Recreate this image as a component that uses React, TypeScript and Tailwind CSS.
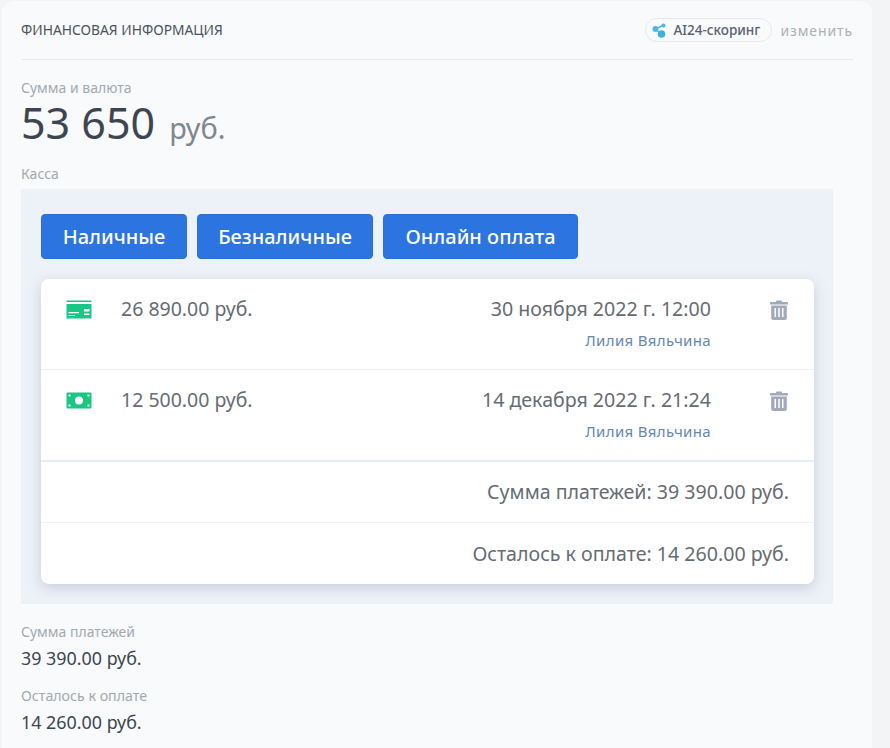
import React from "react";

const font = { fontFamily: '"Noto Sans", sans-serif' };

function Trash() {
  return (
    <svg width="18" height="20" viewBox="0 0 18 20" className="block">
      <path fill="#a0aabb" d="M6.5 0.5h5l0.8 1.5H17.2a0.8 0.8 0 0 1 0.8 0.8V4.500H0V2.800A0.800 0.800 0 0 1 0.800 2H5.700Z" />
      <path fill="#a0aabb" fillRule="evenodd" d="M1.200 5.500H16.800V18a2 2 0 0 1-2 2H3.200a2 2 0 0 1-2-2ZM4.500 8v9H6V8ZM8.250 8v9h1.500V8ZM12 8v9h1.500V8Z" />
    </svg>
  );
}

function CardIcon() {
  return (
    <svg width="26" height="19" viewBox="0 0 26 19" className="mt-px block">
      <rect x="0.500" y="0.500" width="25" height="1.500" fill="#19c684" />
      <path fill="#19c684" fillRule="evenodd" d="M0.500 4H25.500V18.500H0.500ZM2.500 12v1.300H13V12ZM2.500 15v1H9V15ZM18 9v2.500h5.500V9ZM18 13.500v1.500h5.500v-1.500Z" />
    </svg>
  );
}

function CashIcon() {
  return (
    <svg width="26" height="17" viewBox="0 0 26 17" className="mt-[2px] block">
      <path fill="#19c684" fillRule="evenodd" d="M1.500 0.500H24.500A1 1 0 0 1 25.500 1.500V15.500A1 1 0 0 1 24.500 16.500H1.500A1 1 0 0 1 0.500 15.500V1.500A1 1 0 0 1 1.500 0.500ZM13 4.500a4 4 0 1 0 0 8a4 4 0 1 0 0-8ZM2.500 2.500v2h2v-2ZM21.500 2.500v2h2v-2ZM2.500 12.500v2h2v-2ZM21.500 12.500v2h2v-2Z" />
    </svg>
  );
}

function ScoreIcon() {
  return (
    <svg width="15" height="15" viewBox="0 0 15 15" className="block">
      <path d="M3 6L11 2.500M3 6L9.500 11" stroke="#4bb8e0" strokeWidth="1.400" />
      <circle cx="3.500" cy="6" r="3" fill="#4bb8e0" />
      <circle cx="11.500" cy="2.500" r="2" fill="#4bb8e0" />
      <circle cx="9.500" cy="11" r="3.800" fill="#3fb2dc" />
    </svg>
  );
}

function Payment({ icon, amount, date, last }: { icon: React.ReactNode; amount: string; date: string; last?: boolean }) {
  return (
    <div className={last ? "flex h-[90px] pl-[25px] pr-[25px] pt-[16px]" : "flex h-[91px] border-b border-[#eef2f6] pl-[25px] pr-[25px] pt-[16px]"}>
      <div className="w-[55px] pt-[4px]">{icon}</div>
      <div className="text-[19.500px] leading-[28px] text-[#666c73]">{amount}</div>
      <div className="ml-auto text-right">
        <div className="text-[19.600px] leading-[28px] text-[#666c73]">{date}</div>
        <div className="mt-[7px] text-[15px] leading-[20px] tracking-[0.35px] text-[#6488b3]">Лилия Вяльчина</div>
      </div>
      <div className="ml-[59px] w-[19px] pt-[5px]"><Trash /></div>
    </div>
  );
}

function Btn({ width, children }: { width: string; children: React.ReactNode }) {
  return (
    <button className={`h-[45px] rounded-[4px] border border-[#2a6fd4] bg-[#2c74e0] text-[20px] font-medium text-white ${width}`}>
      {children}
    </button>
  );
}

export default function App() {
  return (
    <div style={font} className="h-[748px] w-[890px] overflow-hidden bg-[#f3f4f6] pl-[2px] pt-[1px]">
      <div className="h-[760px] w-[870px] rounded-[12px] bg-[#f8fafc] pl-[19px] pr-[19px]">
        <div className="flex h-[59px] items-center border-b border-[#e6e9ed]">
          <div className="text-[13.800px] uppercase text-[#4b5259]">Финансовая информация</div>
          <div className="ml-auto flex h-[24px] items-center rounded-full border border-[#e5e9ee] pl-[6px] pr-[11px] text-[13.500px] font-medium text-[#59636e]">
            <ScoreIcon />
            <span className="ml-[6px]">AI24-скоринг</span>
          </div>
          <div className="ml-[8px] text-[14px] tracking-[0.9px] text-[#adb1b6]">изменить</div>
        </div>
        <div className="mt-[18px] text-[14px] leading-[19px] text-[#a4a9ae]">Сумма и валюта</div>
        <div className="flex h-[51px] items-baseline">
          <span className="text-[43px] leading-[51px] text-[#3d4650]">53 650</span>
          <span className="ml-[14px] text-[28.800px] leading-[51px] text-[#80868d]">руб.</span>
        </div>
        <div className="mt-[16px] text-[14px] leading-[20px] text-[#a4a9ae]">Касса</div>
        <div className="mt-[5px] h-[415px] w-[812px] bg-[#edf2f9] px-[20px] pt-[25px]">
          <div className="flex gap-[10px]">
            <Btn width="w-[146px]">Наличные</Btn>
            <Btn width="w-[176px]">Безналичные</Btn>
            <Btn width="w-[195px]">Онлайн оплата</Btn>
          </div>
          <div className="mt-[20px] w-[773px] rounded-[8px] bg-white shadow-[0_4px_14px_rgba(90,105,130,0.25)]">
            <Payment icon={<CardIcon />} amount="26 890.00 руб." date="30 ноября 2022 г. 12:00" />
            <Payment icon={<CashIcon />} amount="12 500.00 руб." date="14 декабря 2022 г. 21:24" last />
            <div className="flex h-[63px] items-center justify-end border-t-2 border-b border-t-[#e6eff3] border-b-[#eef2f6] px-[25px] text-[19.600px] text-[#666c73]">
              Сумма платежей: 39 390.00 руб.
            </div>
            <div className="flex h-[61px] items-center justify-end px-[25px] text-[19.600px] text-[#666c73]">
              Осталось к оплате: 14 260.00 руб.
            </div>
          </div>
        </div>
        <div className="mt-[18px] text-[14px] leading-[20px] text-[#a4a9ae]">Сумма платежей</div>
        <div className="mt-[4px] text-[17.900px] leading-[24px] text-[#3d4650]">39 390.00 руб.</div>
        <div className="mt-[16px] text-[14.200px] leading-[20px] text-[#a4a9ae]">Осталось к оплате</div>
        <div className="mt-[4px] text-[17.900px] leading-[24px] text-[#3d4650]">14 260.00 руб.</div>
      </div>
    </div>
  );
}
